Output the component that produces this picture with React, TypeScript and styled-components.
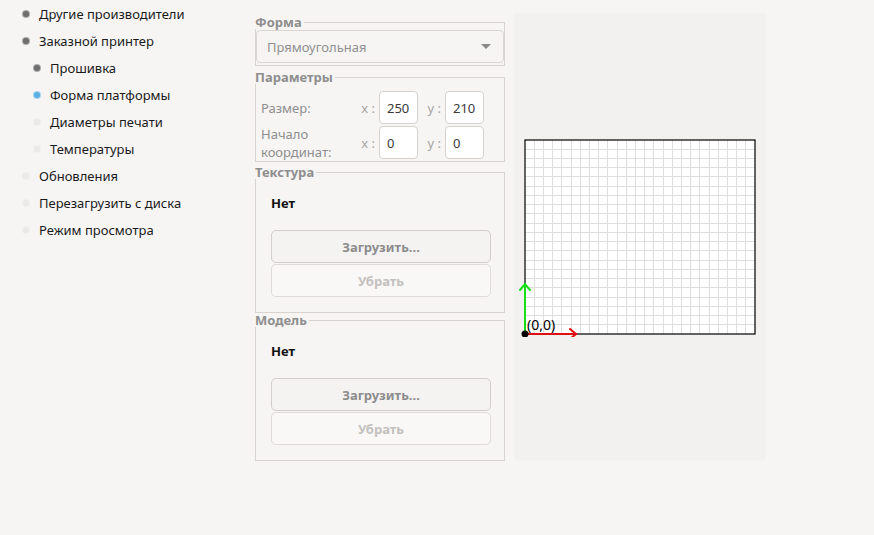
import * as React from "react"
import styled, { createGlobalStyle } from "styled-components"

const GlobalStyle = createGlobalStyle`
    html, body {
        margin: 0;
        padding: 0;
        background: #f6f5f4;
        font-family: "Noto Sans", "DejaVu Sans", sans-serif;
        font-size: 13px;
        color: #2e3436;
    }
`

const Root = styled.div`
    display: flex;
    align-items: flex-start;
    width: 874px;
    height: 535px;
    overflow: hidden;
`

const Sidebar = styled.ul`
    width: 255px;
    margin: 0;
    padding: 0;
    list-style: none;
`

const NavItem = styled.li<{ $level: number }>`
    display: flex;
    align-items: center;
    height: 27px;
    padding-left: ${p => (p.$level === 1 ? 23 : 34)}px;
    gap: 10px;
    color: #1a1a1a;
    white-space: nowrap;
`

const bulletColors = {
    done: "#6e6e6e",
    active: "#5aaee0",
    todo: "#ebe9e6"
}

const Bullet = styled.span<{ $state: keyof typeof bulletColors }>`
    width: 6px;
    height: 6px;
    border-radius: 50%;
    background: ${p => bulletColors[p.$state]};
    box-shadow: 0 0 0 1px ${p => (p.$state === "todo" ? "#f1efec" : p.$state === "active" ? "#a8d4ee" : "#a9a9a9")};
`

const Column = styled.div`
    width: 250px;
    margin-top: 16px;
    display: flex;
    flex-direction: column;
`

const Group = styled.fieldset<{ $mt?: number }>`
    margin: ${p => p.$mt ?? 0}px 0 0 0;
    padding: 0;
    border: 1px solid #d8d4d0;
    border-radius: 0;
    min-width: 0;
`

const GroupBody = styled.div<{ $pad: string }>`
    padding: ${p => p.$pad};
`

const Legend = styled.legend`
    padding: 0 2px 0 0;
    margin-left: -1px;
    font-weight: bold;
    color: #8e8e8e;
    font-size: 13px;
    line-height: 13px;
`

const Combo = styled.div`
    height: 33px;
    box-sizing: border-box;
    border: 1px solid #dad6d2;
    border-radius: 4px;
    background: #f6f5f4;
    display: flex;
    align-items: center;
    justify-content: space-between;
    padding: 0 12px 0 10px;
    color: #909090;
`

const ComboArrow = styled.span`
    width: 0;
    height: 0;
    border-left: 5px solid transparent;
    border-right: 5px solid transparent;
    border-top: 5px solid #8a8a8a;
`

const ParamGrid = styled.div`
    display: grid;
    grid-template-columns: 100px 18px 39px 9px 18px 39px;
    grid-auto-rows: 33px;
    row-gap: 2px;
    align-items: center;
`

const ParamLabel = styled.span`
    color: #8e8e8e;
    line-height: 18px;
`

const AxisLabel = styled.span`
    color: #a5a5a5;
    text-align: right;
    padding-right: 4px;
`

const NumField = styled.input`
    width: 39px;
    height: 33px;
    box-sizing: border-box;
    border: 1px solid #d6d2ce;
    border-radius: 4px;
    background: #ffffff;
    padding: 0 0 0 7px;
    font: inherit;
    color: #3a3a3a;
    outline: none;
`

const NoneText = styled.div`
    font-weight: bold;
    color: #111;
    height: 15px;
    line-height: 15px;
    margin-bottom: 19px;
`

const Button = styled.div<{ $dim?: boolean }>`
    height: 33px;
    box-sizing: border-box;
    border: 1px solid ${p => (p.$dim ? "#dfdbd7" : "#d3cecb")};
    border-radius: 5px;
    background: ${p => (p.$dim ? "#f9f8f7" : "#f4f3f2")};
    color: ${p => (p.$dim ? "#c3c1be" : "#8c8c8c")};
    font-weight: bold;
    display: flex;
    align-items: center;
    justify-content: center;
`

const Buttons = styled.div`
    display: flex;
    flex-direction: column;
    gap: 1px;
`

const Preview = styled.div`
    width: 250px;
    height: 446px;
    margin: 14px 0 0 10px;
    background: #f2f1ef;
    box-shadow: 0 0 2px rgba(0, 0, 0, 0.04);
    display: flex;
    align-items: center;
    justify-content: center;
`

const nav = [
    { label: "Другие производители", level: 1, state: "done" },
    { label: "Заказной принтер", level: 1, state: "done" },
    { label: "Прошивка", level: 2, state: "done" },
    { label: "Форма платформы", level: 2, state: "active" },
    { label: "Диаметры печати", level: 2, state: "todo" },
    { label: "Температуры", level: 2, state: "todo" },
    { label: "Обновления", level: 1, state: "todo" },
    { label: "Перезагрузить с диска", level: 1, state: "todo" },
    { label: "Режим просмотра", level: 1, state: "todo" }
] as const

const BedCanvas = () => {
    const x0 = 10
    const y0 = 3
    const w = 230
    const h = 194
    const cols = 25
    const rows = 21
    const lines: React.ReactNode[] = []
    for (let i = 1; i < cols; i++) {
        const x = x0 + (w * i) / cols
        lines.push(<line key={"v" + i} x1={x} y1={y0} x2={x} y2={y0 + h} />)
    }
    for (let j = 1; j < rows; j++) {
        const y = y0 + (h * j) / rows
        lines.push(<line key={"h" + j} x1={x0} y1={y} x2={x0 + w} y2={y} />)
    }
    const ox = x0
    const oy = y0 + h
    return (
        <svg width="250" height="200" viewBox="0 0 250 200">
            <rect x={x0} y={y0} width={w} height={h} fill="#ffffff" />
            <g stroke="#dedede" strokeWidth="1" shapeRendering="crispEdges">
                {lines}
            </g>
            <rect x={x0} y={y0} width={w} height={h} fill="none" stroke="#000" strokeWidth="1.2" />
            <g stroke="#e01010" strokeWidth="2" fill="none" strokeLinecap="round">
                <line x1={ox} y1={oy} x2={ox + 51} y2={oy} />
                <polyline points={`${ox + 45},${oy - 5} ${ox + 51},${oy} ${ox + 45},${oy + 5}`} />
            </g>
            <g stroke="#14e014" strokeWidth="2" fill="none" strokeLinecap="round">
                <line x1={ox} y1={oy} x2={ox} y2={oy - 50} />
                <polyline points={`${ox - 5},${oy - 44} ${ox},${oy - 50} ${ox + 5},${oy - 44}`} />
            </g>
            <circle cx={ox} cy={oy} r="3.5" fill="#000" />
            <text x={ox + 2} y={oy - 4} fontSize="14" fill="#000" fontFamily="Noto Sans, sans-serif">
                (0,0)
            </text>
        </svg>
    )
}

const FileGroup = ({ title, mt }: { title: string; mt: number }) => (
    <Group $mt={mt}>
        <Legend>{title}</Legend>
        <GroupBody $pad="17px 13px 15px 15px">
            <NoneText>Нет</NoneText>
            <Buttons>
                <Button>Загрузить...</Button>
                <Button $dim>Убрать</Button>
            </Buttons>
        </GroupBody>
    </Group>
)

export default function App() {
    return (
        <>
            <GlobalStyle />
            <Root>
                <Sidebar>
                    {nav.map(item => (
                        <NavItem key={item.label} $level={item.level}>
                            <Bullet $state={item.state} />
                            {item.label}
                        </NavItem>
                    ))}
                </Sidebar>
                <Column>
                    <Group>
                        <Legend>Форма</Legend>
                        <GroupBody $pad="1px 0 2px 0">
                            <Combo>
                                Прямоугольная
                                <ComboArrow />
                            </Combo>
                        </GroupBody>
                    </Group>
                    <Group $mt={5}>
                        <Legend>Параметры</Legend>
                        <GroupBody $pad="7px 0 2px 5px">
                            <ParamGrid>
                                <ParamLabel>Размер:</ParamLabel>
                                <AxisLabel>x :</AxisLabel>
                                <NumField readOnly value="250" />
                                <span />
                                <AxisLabel>y :</AxisLabel>
                                <NumField readOnly value="210" />
                                <ParamLabel>
                                    Начало
                                    <br />
                                    координат:
                                </ParamLabel>
                                <AxisLabel>x :</AxisLabel>
                                <NumField readOnly value="0" />
                                <span />
                                <AxisLabel>y :</AxisLabel>
                                <NumField readOnly value="0" />
                            </ParamGrid>
                        </GroupBody>
                    </Group>
                    <FileGroup title="Текстура" mt={4} />
                    <FileGroup title="Модель" mt={1} />
                </Column>
                <Preview>
                    <BedCanvas />
                </Preview>
            </Root>
        </>
    )
}
